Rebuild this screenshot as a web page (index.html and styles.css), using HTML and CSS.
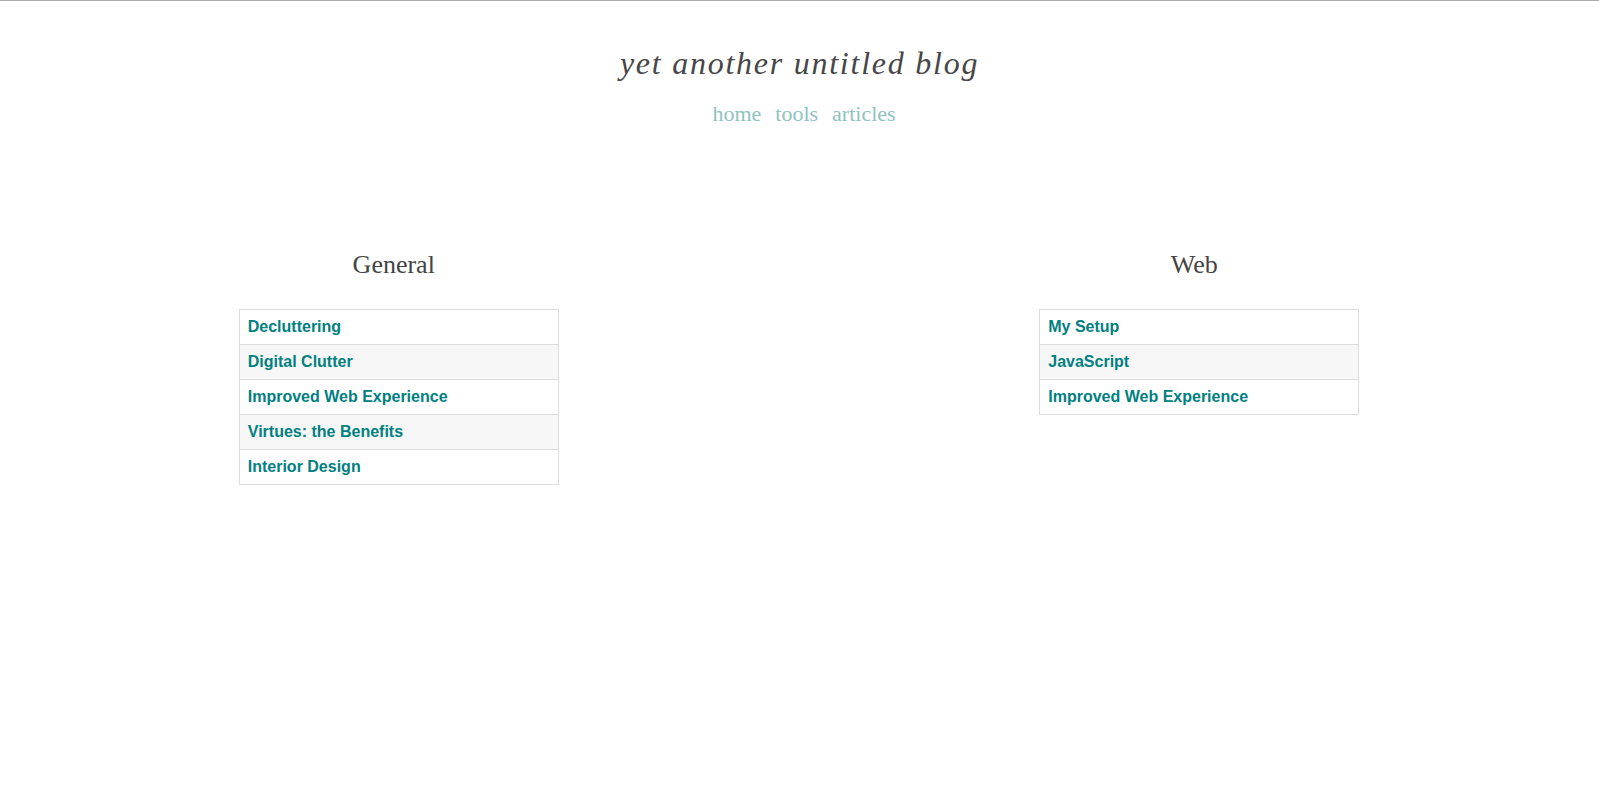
FILE: index.html
```html
<!DOCTYPE html>
<html lang="en">

<head>
  <meta charset="UTF-8">
  <meta name="viewport" content="width=device-width, initial-scale=1.0">
  <title>yet another untitled blog</title>
  <link rel="stylesheet" href="styles.css">
</head>

<body>
  <header id="masthead">
    <h1 class="site-title">yet another untitled blog</h1>
    <nav class="site-nav">
      <a href="#">home</a>
      <a href="#">tools</a>
      <a href="#">articles</a>
    </nav>
  </header>

  <main class="categories">
    <section class="category">
      <h2>General</h2>
      <table class="article-list">
        <tbody>
          <tr><td><a href="#">Decluttering</a></td></tr>
          <tr><td><a href="#">Digital Clutter</a></td></tr>
          <tr><td><a href="#">Improved Web Experience</a></td></tr>
          <tr><td><a href="#">Virtues: the Benefits</a></td></tr>
          <tr><td><a href="#">Interior Design</a></td></tr>
        </tbody>
      </table>
    </section>

    <section class="category">
      <h2>Web</h2>
      <table class="article-list">
        <tbody>
          <tr><td><a href="#">My Setup</a></td></tr>
          <tr><td><a href="#">JavaScript</a></td></tr>
          <tr><td><a href="#">Improved Web Experience</a></td></tr>
        </tbody>
      </table>
    </section>
  </main>
</body>

</html>
```

FILE: styles.css
```css
body {
  margin: 0;
  border-top: 1px solid #aaa;
  background-color: #fff;
  font-family: 'Liberation Serif', serif;
  color: #444;
}

#masthead {
  padding-top: 44px;
  text-align: center;
}

.site-title {
  margin: 0;
  font-size: 32px;
  line-height: 36px;
  font-style: italic;
  font-weight: normal;
  letter-spacing: 1.75px;
  color: #474747;
}

.site-nav {
  margin-top: 20px;
  padding-left: 9px;
  display: flex;
  justify-content: center;
  gap: 14px;
  font-size: 22px;
  line-height: 26px;
}

.site-nav a {
  color: #8fc3c1;
  text-decoration: none;
}

.categories {
  margin-top: 123px;
  display: grid;
  grid-template-columns: 1fr 1fr;
}

.category:first-child {
  padding-right: 2px;
}

.category h2 {
  margin: 0 0 29px;
  padding-right: 10px;
  font-size: 26px;
  line-height: 30px;
  font-weight: normal;
  text-align: center;
  color: #444;
}

.article-list {
  width: 320px;
  margin: 0 auto;
  border-collapse: collapse;
  font-family: 'Liberation Sans', Arial, sans-serif;
  font-size: 16px;
  line-height: 18px;
  font-weight: bold;
}

.article-list td {
  padding: 8px;
  border: 1px solid #ddd;
}

.article-list tr:nth-child(even) {
  background-color: #f7f7f7;
}

.article-list a {
  color: #008080;
  text-decoration: none;
}
```
